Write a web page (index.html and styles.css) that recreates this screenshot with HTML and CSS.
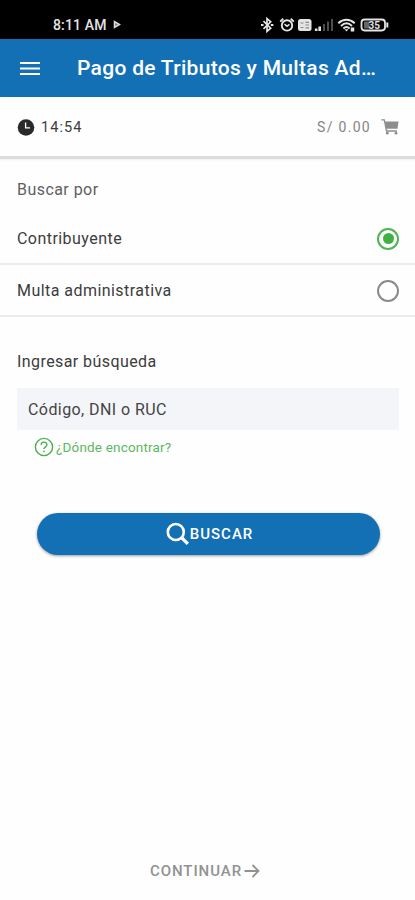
FILE: index.html
```
<!DOCTYPE html>
<html lang="es">
<head>
    <meta charset="UTF-8">
    <meta name="viewport" content="width=device-width, initial-scale=1.0">
    <title>Pago de Tributos y Multas Administrativas</title>
    <link rel="stylesheet" href="styles.css">
</head>
<body>
    <div class="status-bar">
        <span class="status-time">8:11 AM</span>
        <svg class="status-play" width="9" height="10" viewBox="0 0 9 10"><path d="M1.5 1.5v6l5-3z" fill="#777" stroke="#ddd" stroke-width="1.5"/></svg>
        <svg class="status-icons" width="130" height="18" viewBox="0 0 130 18" fill="none" stroke="#e4e4e4">
            <!-- bluetooth -->
            <path d="M3.5 5.2l7.200 7-3.700 3.200V2.600l3.700 3.200-7.200 7" stroke-width="1.700"/>
            <path d="M1 9h2.500M10.800 9h2.600" stroke-width="2"/>
            <!-- alarm -->
            <circle cx="27" cy="9.400" r="5.200" stroke-width="1.900"/>
            <path d="M20.200 5.600l3-2.800M33.800 5.600l-3-2.800" stroke-width="1.900"/>
            <path d="M24.500 8.200l2.500 2 2.500-1.800" stroke-width="1.500"/>
            <!-- sim badge -->
            <rect x="38" y="3" width="13.500" height="12" rx="2.500" fill="#e4e4e4" stroke="none"/>
            <path d="M40.500 7h3M45.500 6.300h3.500M40.500 11.500h3M45.500 9h3.500M45.500 11.800h3.500" stroke="#888" stroke-width="1.200"/>
            <!-- signal -->
            <path d="M56.200 15v-2.600M59.700 15v-4.400" stroke-width="2.600"/>
            <path d="M64 15V8M68 15V5.500M72 15V3" stroke="#4d4d4d" stroke-width="2"/>
            <!-- wifi -->
            <path d="M78.300 7.300c5-4.600 11.400-4.600 16.400 0M81 9.900c3.400-3.200 7.600-3.200 11 0M83.400 12.400c2-1.800 4.200-1.800 6.200 0" stroke-width="2"/>
            <path d="M84.500 13.300l2 2.200 2-2.200z" fill="#e4e4e4" stroke="none"/>
            <path d="M92.500 11.500v4" stroke-width="3.500"/>
            <!-- battery -->
            <rect x="101.500" y="3.500" width="23.500" height="11" rx="3.200" stroke-width="1.800"/>
            <rect x="104" y="5.500" width="5.500" height="7" fill="#666" stroke="none"/>
            <path d="M127.300 6.500v5" stroke-width="2"/>
            <text class="battery-text" x="108.500" y="12.500">35</text>
        </svg>
    </div>
    <header class="header">
        <svg class="menu" width="20" height="16" viewBox="0 0 20 16"><path d="M0 3h20M0 8.500h20M0 14h20" stroke="#fff" stroke-width="2"/></svg>
        <h1>Pago de Tributos y Multas Ad…</h1>
    </header>
    <div class="summary">
        <svg class="clock" width="18" height="18" viewBox="0 0 18 18"><circle cx="9" cy="9.500" r="8.300" fill="#2a2a2a"/><path d="M8.600 4.600v5.200h4.400" fill="none" stroke="#fff" stroke-width="1.300"/></svg>
        <span class="time">14:54</span>
        <span class="total">S/ 0.00</span>
        <svg class="cart" width="18" height="16" viewBox="0 0 18 16"><path d="M3.800 2.500H17.500l-1 7.300H5.200z" fill="#8d8d8d"/><path d="M.3 .9H3.300L5.500 12H16" fill="none" stroke="#8d8d8d" stroke-width="1.300"/><circle cx="6.300" cy="14.200" r="1.400" fill="#8d8d8d"/><circle cx="15" cy="14.200" r="1.400" fill="#8d8d8d"/></svg>
    </div>
    <main class="content">
        <p class="list-title">Buscar por</p>
        <div class="option">
            <span>Contribuyente</span>
            <span class="radio checked"></span>
        </div>
        <div class="option">
            <span>Multa administrativa</span>
            <span class="radio"></span>
        </div>
        <p class="search-title">Ingresar búsqueda</p>
        <input class="search-input" type="text" placeholder="Código, DNI o RUC">
        <div class="help">
            <svg width="20" height="20" viewBox="0 0 20 20" fill="none" stroke="#4caf50"><circle cx="10" cy="10" r="8.600" stroke-width="1.400"/><path d="M7.100 7.900c0-3.600 5.800-3.600 5.800-.2 0 2.100-2.900 2.200-2.900 4.400" stroke-width="1.400"/><circle cx="10" cy="14.300" r=".9" fill="#4caf50" stroke="none"/></svg>
            <span>¿Dónde encontrar?</span>
        </div>
        <button class="search-btn">
            <svg width="24" height="24" viewBox="0 0 24 24" fill="none" stroke="#fff"><circle cx="9.800" cy="10" r="8" stroke-width="2.600"/><path d="M15.500 15.500l6.300 6.300" stroke-width="3.300"/></svg>
            <span>BUSCAR</span>
        </button>
    </main>
    <footer class="footer">
        <span>CONTINUAR</span>
        <svg width="16" height="14" viewBox="0 0 16 14" fill="none" stroke="#929292" stroke-width="1.800"><path d="M.5 7h14M8.500 1l6 6-6 6"/></svg>
    </footer>
</body>
</html>
```
FILE: styles.css
```
* {
    box-sizing: border-box;
}
body {
    margin: 0;
    height: 900px;
    display: flex;
    flex-direction: column;
    font-family: Roboto, "Liberation Sans", sans-serif;
    font-size: 16px;
    color: #3c3c3c;
    background: #fefefe;
}
p, h1 {
    margin: 0;
}
svg {
    flex-shrink: 0;
}
.status-bar {
    display: flex;
    align-items: center;
    height: 39px;
    padding: 10px 25px 0 53px;
    background: #000;
    color: #e4e4e4;
}
.status-time {
    font-size: 14px;
    font-weight: 500;
    letter-spacing: 0.15px;
}
.status-play {
    margin-left: 6px;
}
.status-icons {
    margin-left: auto;
}
.battery-text {
    font-size: 10px;
    font-weight: 700;
    fill: #e4e4e4;
    stroke: none;
}
.header {
    display: flex;
    align-items: center;
    height: 58px;
    padding-left: 20px;
    background: #1470b4;
    color: #fff;
}
.header h1 {
    margin-left: 37px;
    font-size: 21px;
    font-weight: 500;
    letter-spacing: 0.3px;
    white-space: nowrap;
}
.summary {
    display: flex;
    align-items: center;
    height: 62px;
    padding: 1px 16px 0 17px;
    border-bottom: 3px solid #dcdcdc;
    box-shadow: 0 1px 2px rgba(0, 0, 0, 0.06);
}
.time {
    margin-left: 6px;
    font-size: 14.5px;
    letter-spacing: 1.1px;
}
.total {
    margin-left: auto;
    font-size: 14px;
    letter-spacing: 1.3px;
    color: #858585;
}
.cart {
    margin-left: 10px;
}
.content {
    flex: 1;
}
.list-title {
    padding-left: 17px;
    height: 54px;
    line-height: 61px;
    letter-spacing: 0.45px;
    color: #606060;
}
.option {
    display: flex;
    align-items: center;
    justify-content: space-between;
    height: 52px;
    padding: 1px 16px 0 17px;
    border-bottom: 2px solid #ebebeb;
    letter-spacing: 0.45px;
}
.radio {
    display: flex;
    align-items: center;
    justify-content: center;
    width: 22px;
    height: 22px;
    border: 2px solid #8a8a8a;
    border-radius: 50%;
}
.radio.checked {
    border-color: #4fb552;
}
.radio.checked::after {
    content: "";
    width: 11px;
    height: 11px;
    border-radius: 50%;
    background: #3fb143;
}
.search-title {
    margin-top: 35px;
    padding-left: 17px;
    line-height: 20px;
    letter-spacing: 0.42px;
}
.search-input {
    display: block;
    width: 382px;
    height: 42px;
    margin: 16px 0 0 17px;
    padding: 0 11px;
    border: none;
    border-radius: 2px;
    background: #f4f5f9;
    font: inherit;
    letter-spacing: 0.42px;
}
.search-input::placeholder {
    color: #444;
}
.help {
    display: flex;
    align-items: center;
    height: 20px;
    margin: 7px 0 0 34px;
    font-size: 13.5px;
    letter-spacing: 0.17px;
    color: #5cb860;
}
.help span {
    margin-left: 2px;
}
.search-btn {
    display: flex;
    align-items: center;
    justify-content: center;
    width: 343px;
    height: 42px;
    margin: 56px 0 0 37px;
    padding: 0 0 0 2px;
    border: none;
    border-radius: 21px;
    background: #1470b4;
    box-shadow: 0 1px 3px rgba(0, 0, 0, 0.4);
    color: #fff;
    font-family: inherit;
    font-size: 15px;
    font-weight: 500;
    letter-spacing: 1px;
}
.footer {
    display: flex;
    align-items: center;
    justify-content: center;
    height: 58px;
    padding-right: 5px;
    font-size: 15px;
    font-weight: 500;
    letter-spacing: 0.95px;
    color: #929292;
}
.footer svg {
    margin-left: 2px;
}
```
